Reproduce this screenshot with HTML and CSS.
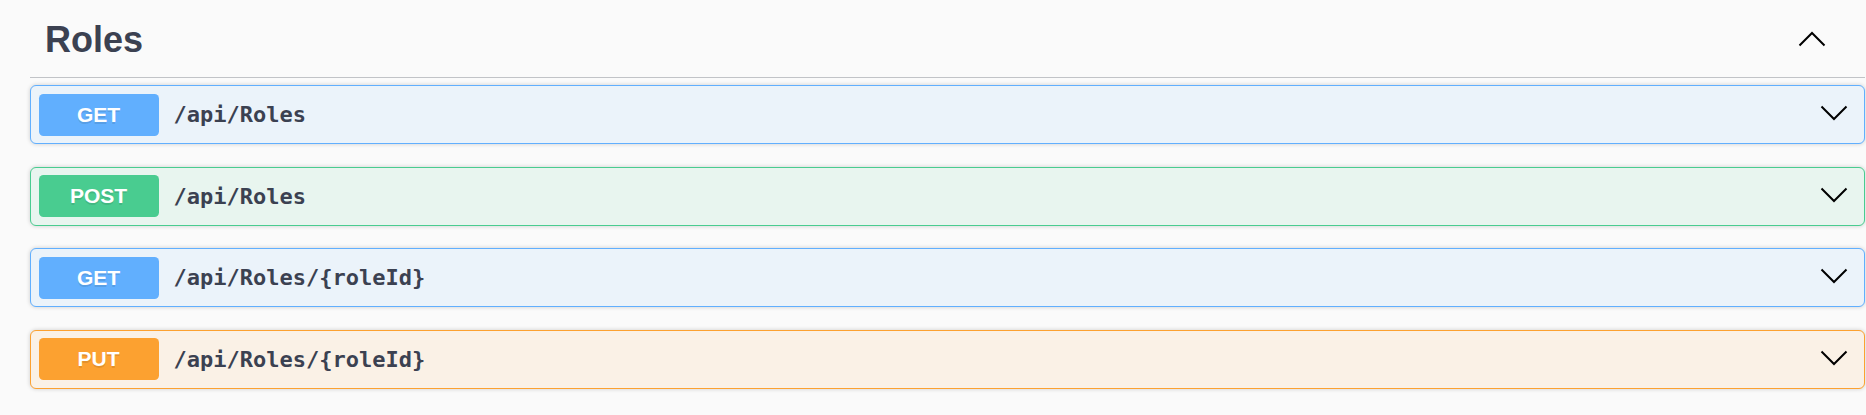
FILE: index.html
```html
<!DOCTYPE html>
<html lang="en">
<head>
<meta charset="utf-8">
<title>Roles</title>
<link rel="stylesheet" href="styles.css">
</head>
<body>
<div class="wrapper">
  <section class="tag-section">
    <h3 class="tag-header">
      <span class="tag-title">Roles</span>
      <svg class="arrow-up" width="28" height="16" viewBox="0 0 28 16" aria-hidden="true">
        <polyline points="1.5,14.5 14,2 26.5,14.5" fill="none" stroke="#000" stroke-width="2"/>
      </svg>
    </h3>
    <div class="opblock get">
      <span class="method">GET</span>
      <span class="path">/api/Roles</span>
      <svg class="arrow" width="28" height="16" viewBox="0 0 28 16" aria-hidden="true">
        <polyline points="1.5,1.5 14,14 26.5,1.5" fill="none" stroke="#000" stroke-width="2"/>
      </svg>
    </div>
    <div class="opblock post">
      <span class="method">POST</span>
      <span class="path">/api/Roles</span>
      <svg class="arrow" width="28" height="16" viewBox="0 0 28 16" aria-hidden="true">
        <polyline points="1.5,1.5 14,14 26.5,1.5" fill="none" stroke="#000" stroke-width="2"/>
      </svg>
    </div>
    <div class="opblock get">
      <span class="method">GET</span>
      <span class="path">/api/Roles/{roleId}</span>
      <svg class="arrow" width="28" height="16" viewBox="0 0 28 16" aria-hidden="true">
        <polyline points="1.5,1.5 14,14 26.5,1.5" fill="none" stroke="#000" stroke-width="2"/>
      </svg>
    </div>
    <div class="opblock put">
      <span class="method">PUT</span>
      <span class="path">/api/Roles/{roleId}</span>
      <svg class="arrow" width="28" height="16" viewBox="0 0 28 16" aria-hidden="true">
        <polyline points="1.5,1.5 14,14 26.5,1.5" fill="none" stroke="#000" stroke-width="2"/>
      </svg>
    </div>
  </section>
</div>
</body>
</html>
```

FILE: styles.css
```css
html, body {
  margin: 0;
  padding: 0;
  background: #fafafa;
}

body {
  font-family: "Liberation Sans", Arial, sans-serif;
  color: #3b4151;
}

.wrapper {
  padding: 0 1px 0 30px;
}

.tag-header {
  display: flex;
  align-items: center;
  margin: 0;
  padding: 16px 39px 14px 15px;
  border-bottom: 1px solid #c1c3c7;
  font-size: 36px;
  line-height: 47px;
  font-weight: 700;
  color: #3b4151;
}

.tag-title {
  flex: 1;
}

.arrow-up {
  display: block;
  margin-top: -2px;
}

.tag-header + .opblock {
  margin-top: 7px;
}

.opblock {
  display: flex;
  align-items: center;
  padding: 7.5px 16px 7.5px 7.5px;
  margin-bottom: 22.6px;
  border: 1px solid #61affe;
  border-radius: 6px;
  box-shadow: 0 0 4.5px rgba(0, 0, 0, 0.19);
}

.opblock.get {
  background: #ebf3fa;
  border-color: #61affe;
}

.opblock.post {
  background: #e8f5ef;
  border-color: #49cc90;
}

.opblock.put {
  background: #faf1e6;
  border-color: #fca130;
}

.method {
  display: flex;
  align-items: center;
  justify-content: center;
  width: 120px;
  height: 42px;
  border-radius: 4.5px;
  font-family: "Liberation Sans", Arial, sans-serif;
  font-size: 21px;
  font-weight: 700;
  color: #fff;
  text-shadow: 0 1.5px 0 rgba(0, 0, 0, 0.1);
}

.get .method { background: #61affe; }
.post .method { background: #49cc90; }
.put .method { background: #fca130; }

.path {
  flex: 1;
  margin-left: 15px;
  font-family: "DejaVu Sans Mono", "Liberation Mono", monospace;
  font-size: 22px;
  font-weight: 700;
  color: #3b4151;
}

.arrow {
  display: block;
  margin-top: -3px;
}
```
